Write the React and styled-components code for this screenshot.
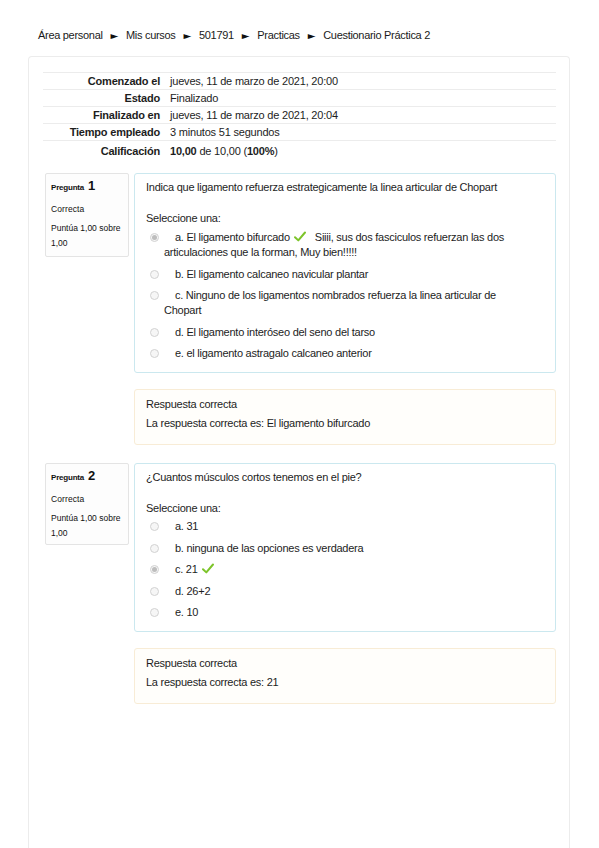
import React from 'react';
import styled, { createGlobalStyle } from 'styled-components';

const GlobalStyle = createGlobalStyle`
  body {
    margin: 0;
    background: #fff;
    font-family: "Liberation Sans", Arial, sans-serif;
    color: #1d1d1d;
  }
`;

const Page = styled.div`
  width: 599px;
  height: 848px;
  overflow: hidden;
`;

const Breadcrumb = styled.nav`
  padding: 29px 0 0 38px;
  height: 27px;
  font-size: 11px;
  line-height: 13px;
  letter-spacing: -0.3px;
  color: #1a1a1a;
  display: flex;
  gap: 8px;
`;

const Arrow = styled.span`
  font-family: "DejaVu Sans", sans-serif;
  font-size: 10px;
  color: #111;
`;

const Panel = styled.main`
  margin-left: 28px;
  width: 542px;
  height: 800px;
  border: 1px solid #ececec;
  border-bottom: none;
  border-radius: 4px 4px 0 0;
  padding: 15px 13px 0 14px;
  box-sizing: border-box;
`;

const Summary = styled.div`
  display: grid;
  grid-template-columns: 122px 1fr;
  font-size: 11px;
  letter-spacing: -0.2px;
  margin-bottom: 13px;
`;

const Cell = styled.div`
  border-top: 1px solid #ececec;
  height: ${p => (p.last ? 19 : 16)}px;
  line-height: ${p => (p.last ? 21 : 16)}px;
  padding: ${p => (p.label ? '0 5px 0 0' : '0 0 0 5px')};
  text-align: ${p => (p.label ? 'right' : 'left')};
  font-weight: ${p => (p.label ? 'bold' : 'normal')};
`;

const Question = styled.section`
  display: flex;
  gap: 5px;
  padding-left: 2px;
  margin-bottom: 18px;
`;

const Info = styled.div`
  width: 84px;
  height: ${p => p.h}px;
  box-sizing: border-box;
  border: 1px solid #e4e4e4;
  border-radius: 2px;
  background: #fdfdfd;
  padding: 4px 5px;
  font-size: 8px;
  line-height: 15px;
  color: #111;
  flex-shrink: 0;
`;

const InfoNo = styled.div`
  font-weight: bold;
  height: 20px;
  letter-spacing: -0.2px;
  b {
    font-size: 13px;
    margin-left: 2px;
  }
`;

const InfoState = styled.div`
  height: 21px;
  line-height: 23px;
  font-size: 8.5px;
  letter-spacing: 0.1px;
`;

const InfoGrade = styled.div`
  line-height: 15px;
  padding-top: 2px;
  font-size: 8.5px;
`;

const Content = styled.div`
  flex: 1;
  display: flex;
  flex-direction: column;
  gap: 16px;
`;

const Formulation = styled.div`
  border: 1px solid #cbe8ef;
  border-radius: 3px;
  padding: 6px 11px 10px;
  font-size: 11px;
  line-height: 15px;
  letter-spacing: -0.25px;
  height: ${p => p.h}px;
  box-sizing: border-box;
`;

const QText = styled.p`
  margin: 0 0 16px;
`;

const Prompt = styled.div`
  margin-bottom: ${p => p.gap}px;
`;

const Option = styled.div`
  display: flex;
  align-items: flex-start;
  padding: 3px 0 3.5px;
`;

const Radio = styled.span`
  width: 9px;
  height: 9px;
  margin: 3px 0 0 4px;
  border-radius: 50%;
  border: 1px solid #d2d2d2;
  background: #f6f6f6;
  flex-shrink: 0;
  box-sizing: border-box;
  display: flex;
  align-items: center;
  justify-content: center;
  &::after {
    content: '';
    width: 5px;
    height: 5px;
    border-radius: 50%;
    background: ${p => (p.checked ? '#bdbdbd' : 'transparent')};
  }
`;

const Label = styled.div`
  margin-left: 5px;
  max-width: 352px;
  text-indent: 11px;
`;

const Fb = styled.span`
  margin-left: 9px;
`;

const Feedback = styled.div`
  border: 1px solid #f8ecd6;
  border-radius: 3px;
  background: #fffefb;
  padding: 5px 11px 0;
  height: 56px;
  box-sizing: border-box;
  font-size: 11px;
  line-height: 19px;
  letter-spacing: -0.25px;
`;

function Check() {
  return (
    <svg width="12" height="11" viewBox="0 0 12 11" style={{ marginLeft: 4, verticalAlign: -1 }}>
      <path d="M1 6.2 L4.3 9.4 L11 1.5" fill="none" stroke="#7dc42a" strokeWidth="2" strokeLinecap="round" strokeLinejoin="round" />
    </svg>
  );
}

const summary = [
  ['Comenzado el', 'jueves, 11 de marzo de 2021, 20:00'],
  ['Estado', 'Finalizado'],
  ['Finalizado en', 'jueves, 11 de marzo de 2021, 20:04'],
  ['Tiempo empleado', '3 minutos 51 segundos'],
];

const questions = [
  {
    no: 1,
    infoH: 84,
    formH: 200,
    promptGap: 1,
    text: 'Indica que ligamento refuerza estrategicamente la linea articular de Chopart',
    options: [
      { t: 'a. El ligamento bifurcado', checked: true, fb: 'Siiii, sus dos fasciculos refuerzan las dos articulaciones que la forman, Muy bien!!!!!' },
      { t: 'b. El ligamento calcaneo navicular plantar' },
      { t: 'c. Ninguno de los ligamentos nombrados refuerza la linea articular de Chopart' },
      { t: 'd. El ligamento interóseo del seno del tarso' },
      { t: 'e. el ligamento astragalo calcaneo anterior' },
    ],
    answer: 'El ligamento bifurcado',
  },
  {
    no: 2,
    infoH: 82,
    formH: 169,
    promptGap: 0,
    text: '¿Cuantos músculos cortos tenemos en el pie?',
    options: [
      { t: 'a. 31' },
      { t: 'b. ninguna de las opciones es verdadera' },
      { t: 'c. 21', checked: true },
      { t: 'd. 26+2' },
      { t: 'e. 10' },
    ],
    answer: '21',
  },
];

export default function App() {
  return (
    <Page>
      <GlobalStyle />
      <Breadcrumb>
        <span>Área personal</span><Arrow>►</Arrow>
        <span>Mis cursos</span><Arrow>►</Arrow>
        <span>501791</span><Arrow>►</Arrow>
        <span>Practicas</span><Arrow>►</Arrow>
        <span>Cuestionario Práctica 2</span>
      </Breadcrumb>
      <Panel>
        <Summary>
          {summary.map(([k, v]) => (
            <React.Fragment key={k}>
              <Cell label>{k}</Cell>
              <Cell>{v}</Cell>
            </React.Fragment>
          ))}
          <Cell label last>Calificación</Cell>
          <Cell last><b>10,00</b> de 10,00 (<b>100%</b>)</Cell>
        </Summary>

        {questions.map(q => (
          <Question key={q.no}>
            <Info h={q.infoH}>
              <InfoNo>Pregunta <b>{q.no}</b></InfoNo>
              <InfoState>Correcta</InfoState>
              <InfoGrade>Puntúa 1,00 sobre 1,00</InfoGrade>
            </Info>
            <Content>
              <Formulation h={q.formH}>
                <QText>{q.text}</QText>
                <Prompt gap={q.promptGap}>Seleccione una:</Prompt>
                {q.options.map(o => (
                  <Option key={o.t}>
                    <Radio checked={o.checked} />
                    <Label>
                      {o.t}
                      {o.checked && <Check />}
                      {o.fb && <Fb>{o.fb}</Fb>}
                    </Label>
                  </Option>
                ))}
              </Formulation>
              <Feedback>
                <div>Respuesta correcta</div>
                <div>La respuesta correcta es: {q.answer}</div>
              </Feedback>
            </Content>
          </Question>
        ))}
      </Panel>
    </Page>
  );
}
